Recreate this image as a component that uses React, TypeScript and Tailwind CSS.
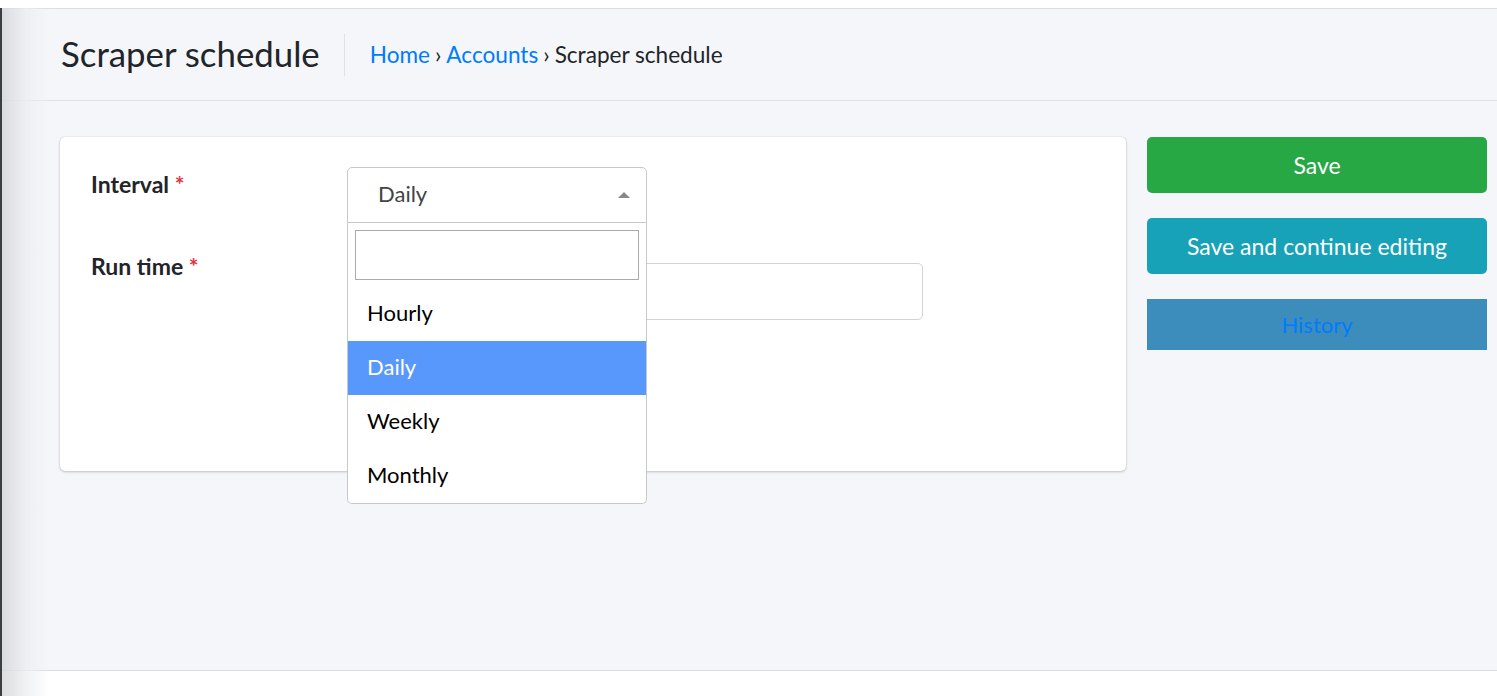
import React from "react";

export default function App() {
  const font = { fontFamily: "Lato, 'Noto Sans', sans-serif" };
  return (
    <div
      className="relative flex h-[696px] w-full flex-col overflow-hidden bg-[#f4f6f9] text-[#212529]"
      style={font}
    >
      {/* sidebar edge shadow */}
      <div className="pointer-events-none absolute left-0 top-[8px] bottom-0 w-[2px] bg-[#3a3f44]" />
      <div className="pointer-events-none absolute left-[2px] top-[8px] bottom-0 w-[48px] bg-gradient-to-r from-[#d4d5d8] via-[#eceef1] to-transparent opacity-80" />

      <div className="h-[9px] shrink-0 border-b border-[#dcdde0] bg-white" />

      {/* header */}
      <div className="flex h-[92px] shrink-0 items-center border-b border-[#dee2e6] pl-[61px]">
        <h1 className="text-[34.8px] font-normal leading-none text-[#212529]">Scraper schedule</h1>
        <div className="ml-[24px] mr-[25px] h-[42px] w-px bg-[#dee2e6]" />
        <div className="flex items-center text-[22.6px]">
          <span className="text-[#007bff]">Home</span>
          <span className="mx-[5px] text-[#212529]">›</span>
          <span className="text-[#007bff]">Accounts</span>
          <span className="mx-[5px] text-[#212529]">›</span>
          <span className="text-[#212529]">Scraper schedule</span>
        </div>
      </div>

      {/* content */}
      <div className="flex flex-1 items-start pl-[60px] pt-[36px]">
        <div className="h-[334px] w-[1066px] rounded-[5px] bg-white shadow-[0_0_1px_rgba(0,0,0,0.2),0_1px_3px_rgba(0,0,0,0.2)]">
          <div className="flex flex-col gap-[40px] pl-[31px] pt-[30px]">
            <div className="flex">
              <div className="w-[256px] text-[23px] font-bold">
                Interval <span className="text-[#dc3545]">*</span>
              </div>
              <div className="relative">
                <div className="flex h-[56px] w-[300px] items-center justify-between rounded-t-[5px] border border-[#c7c8ca] bg-white pb-[4px] pl-[30px] pr-[16px]">
                  <span className="text-[22px] text-[#444]">Daily</span>
                  <svg width="12" height="8" viewBox="0 0 12 8" className="mt-[4px]">
                    <path d="M0 7 L6 1 L12 7 Z" fill="#888" />
                  </svg>
                </div>
                <div className="absolute left-0 top-[56px] z-10 w-[300px] rounded-b-[5px] border border-t-0 border-[#c7c8ca] bg-white">
                  <div className="p-[7px]">
                    <div className="h-[50px] w-full border border-[#aaa] bg-white" />
                  </div>
                  {["Hourly", "Daily", "Weekly", "Monthly"].map((o) => (
                    <div
                      key={o}
                      className={
                        o === "Daily"
                          ? "flex h-[54px] items-center bg-[#5897fb] pb-[3px] pl-[19px] text-[22px] text-white"
                          : "flex h-[54px] items-center pb-[3px] pl-[19px] text-[22px] text-black"
                      }
                    >
                      {o}
                    </div>
                  ))}
                </div>
              </div>
            </div>
            <div className="flex">
              <div className="w-[256px] text-[23px] font-bold leading-[6px]">
                Run time <span className="text-[#dc3545]">*</span>
              </div>
              <div className="h-[57px] w-[576px] rounded-[5px] border border-[#ced4da] bg-white" />
            </div>
          </div>
        </div>

        <div className="ml-[21px] flex w-[340px] flex-col gap-[25px]">
          <div className="flex h-[56px] items-center justify-center rounded-[5px] bg-[#28a745] text-[23px] text-white">
            Save
          </div>
          <div className="flex h-[56px] items-center justify-center rounded-[5px] bg-[#17a2b8] text-[23px] text-white">
            Save and continue editing
          </div>
          <div className="flex h-[51px] items-center justify-center bg-[#3c8dbc] text-[22px] text-[#007bff]">
            History
          </div>
        </div>
      </div>

      <div className="h-[26px] shrink-0 border-t border-[#dcdde0] bg-white" />
    </div>
  );
}
